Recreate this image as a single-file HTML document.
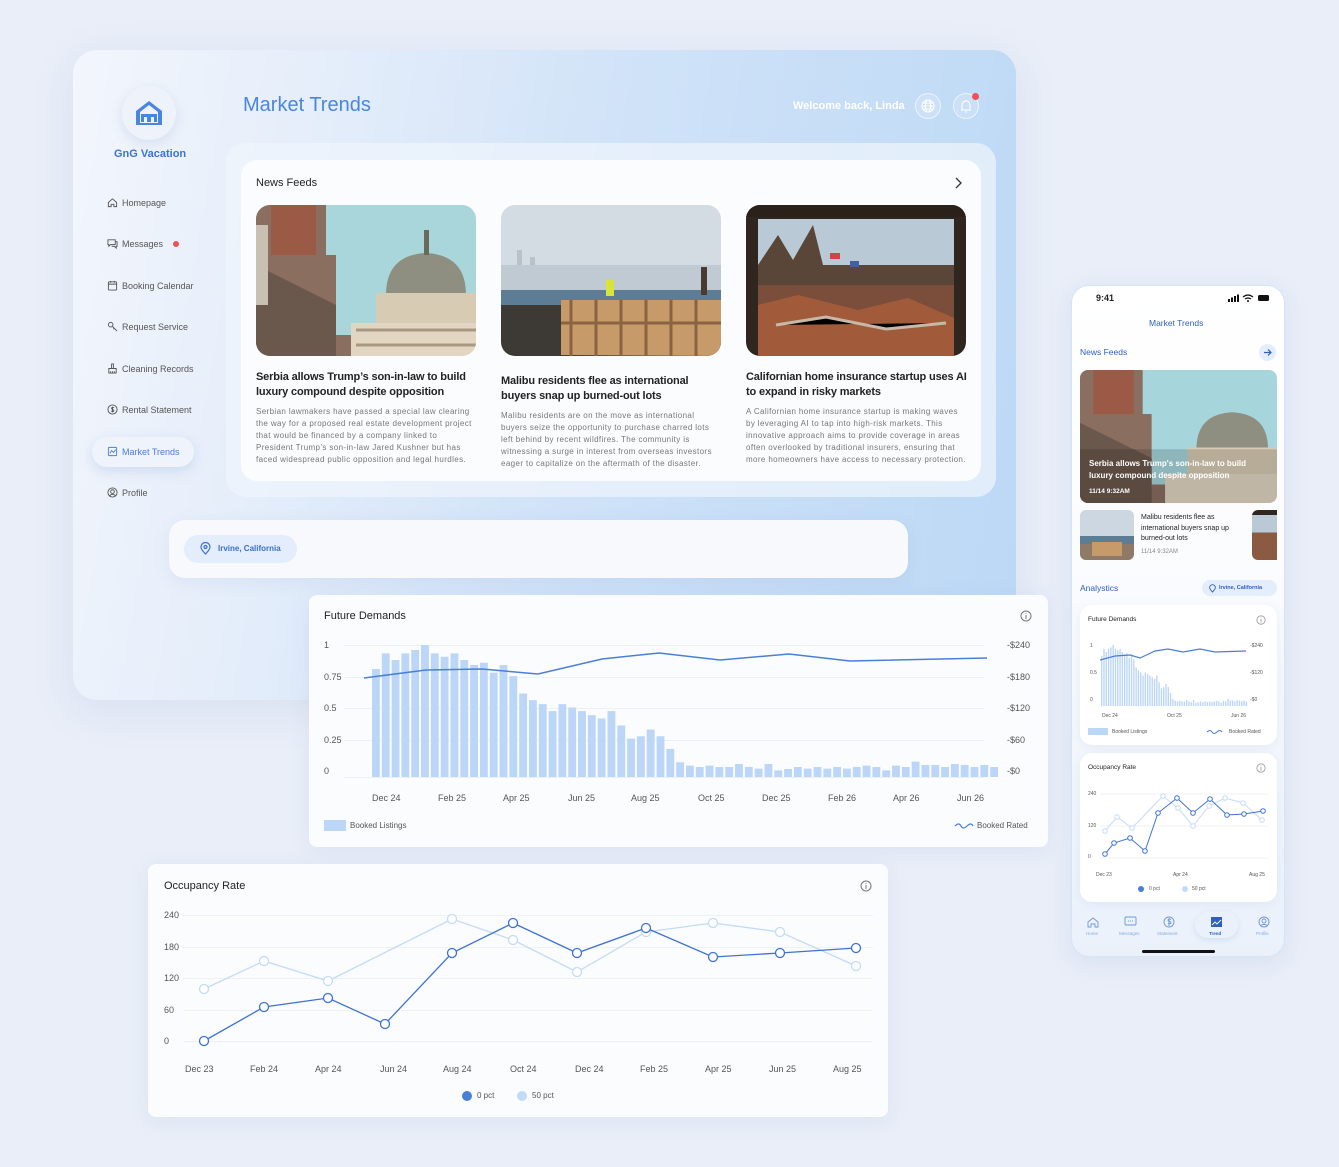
<!DOCTYPE html>
<html><head><meta charset="utf-8">
<style>
*{box-sizing:border-box;margin:0;padding:0}
body{width:1339px;height:1167px;background:#e9eef8;font-family:"Liberation Sans",sans-serif;position:relative;overflow:hidden;color:#222}
.abs{position:absolute}
.panel{left:73px;top:50px;width:943px;height:650px;border-radius:24px;background:linear-gradient(100deg,#f3f6fc 0%,#e4edfa 25%,#cfe2f8 55%,#bcd8f5 100%);box-shadow:0 10px 40px rgba(120,150,200,.15)}
.nav{left:107px;font-size:9px;color:#555;display:flex;align-items:center;gap:4px}
.nav svg{width:11px;height:11px}
.t{white-space:nowrap}
.card{background:#fbfcfe;border-radius:8px;box-shadow:0 4px 20px rgba(120,150,200,.12)}
.news h4{font-size:11px;font-weight:bold;color:#222;line-height:15px;margin-top:14px;white-space:nowrap;letter-spacing:-0.15px}
.news p{font-size:8px;color:#777;line-height:12px;margin-top:6px;white-space:nowrap;letter-spacing:0.38px}
.img{border-radius:14px;overflow:hidden;width:220px;height:151px}
.lbl{font-size:9px;color:#555}
</style></head><body>

<div class="abs panel"></div>
<div class="abs" style="left:122px;top:86px;width:54px;height:54px;border-radius:50%;background:#eef3fb;box-shadow:0 4px 12px rgba(120,150,200,.2)"></div>
<svg class="abs" style="left:134px;top:99px" width="30" height="28" viewBox="0 0 30 28"><path d="M15 2L2 12v14h26V12z" fill="#4a86e0"/><path d="M15 6L6 13v11h18V13z" fill="#eef3fb"/><path d="M7 15h16v8h-3v-5h-3v5h-4v-5h-3v5H7z" fill="#4a86e0"/></svg>
<div class="abs t" style="left:114px;top:148px;font-size:11px;font-weight:bold;color:#3a73d6">GnG Vacation</div>

<div class="abs nav" style="top:197px"><svg viewBox="0 0 12 12" fill="none" stroke="#555" stroke-width="1"><path d="M1.5 6L6 2l4.5 4v4.5h-3V8h-3v2.5h-3z"/></svg>Homepage</div>
<div class="abs nav" style="top:238px"><svg viewBox="0 0 12 12" fill="none" stroke="#555" stroke-width="1"><path d="M1 2h8v5H4l-2 2V7H1z"/><path d="M9 4h2v5h-1v2l-2-2H5"/></svg>Messages<span style="width:6px;height:6px;border-radius:50%;background:#f0505a;margin-left:6px"></span></div>
<div class="abs nav" style="top:280px"><svg viewBox="0 0 12 12" fill="none" stroke="#555" stroke-width="1"><rect x="1.5" y="2" width="9" height="9" rx="1"/><path d="M1.5 4.5h9M4 1v2M8 1v2"/></svg>Booking Calendar</div>
<div class="abs nav" style="top:321px"><svg viewBox="0 0 12 12" fill="none" stroke="#555" stroke-width="1"><circle cx="4" cy="4" r="2.5"/><path d="M6 6l5 5M8 8l-1 1"/></svg>Request Service</div>
<div class="abs nav" style="top:363px"><svg viewBox="0 0 12 12" fill="none" stroke="#555" stroke-width="1"><path d="M5 1h2v5H5zM2 6h8v5H2zM4 9v2M6 9v2M8 9v2"/></svg>Cleaning Records</div>
<div class="abs nav" style="top:404px"><svg viewBox="0 0 12 12" fill="none" stroke="#555" stroke-width="1"><circle cx="6" cy="6" r="5"/><path d="M7.5 4.3C7 3.7 5 3.5 5 4.8S7.5 5.8 7.5 7.2 5.2 8.3 4.5 7.6M6 2.8v6.4"/></svg>Rental Statement</div>
<div class="abs" style="left:92px;top:437px;width:102px;height:30px;border-radius:15px;background:#eef3fc;box-shadow:0 4px 12px rgba(120,150,210,.25)"></div>
<div class="abs nav" style="top:446px;color:#4a7fd8"><svg viewBox="0 0 12 12" fill="none" stroke="#4a7fd8" stroke-width="1"><rect x="1.5" y="1.5" width="9" height="9" rx="1"/><path d="M3 8l2-3 2 2 2.5-3"/></svg>Market Trends</div>
<div class="abs nav" style="top:487px"><svg viewBox="0 0 12 12" fill="none" stroke="#555" stroke-width="1"><circle cx="6" cy="6" r="5"/><circle cx="6" cy="5" r="2"/><path d="M3 9.5c1.5-2 4.5-2 6 0"/></svg>Profile</div>

<div class="abs t" style="left:243px;top:94px;font-size:20px;color:#4a86e0">Market Trends</div>
<div class="abs t" style="left:793px;top:100px;font-size:11px;font-weight:bold;color:#fff">Welcome back, Linda</div>
<div class="abs" style="left:915px;top:93px;width:26px;height:26px;border-radius:50%;border:1px solid rgba(255,255,255,.6);background:rgba(255,255,255,.15)"></div>
<svg class="abs" style="left:921px;top:99px" width="14" height="14" viewBox="0 0 14 14" fill="none" stroke="#fff" stroke-width="1.1"><circle cx="7" cy="7" r="6"/><ellipse cx="7" cy="7" rx="2.6" ry="6"/><path d="M1 7h12M2 4h10M2 10h10"/></svg>
<div class="abs" style="left:953px;top:93px;width:26px;height:26px;border-radius:50%;border:1px solid rgba(255,255,255,.6);background:rgba(255,255,255,.15)"></div>
<svg class="abs" style="left:960px;top:99px" width="12" height="14" viewBox="0 0 12 14" fill="none" stroke="#fff" stroke-width="1.1"><path d="M2 11V6a4 4 0 018 0v5zM1 11h10M5 13h2M6 1v1"/></svg>
<div class="abs" style="left:972px;top:93px;width:7px;height:7px;border-radius:50%;background:#f0505a"></div>

<div class="abs" style="left:226px;top:143px;width:770px;height:354px;border-radius:20px;background:rgba(240,245,252,.7)"></div>
<div class="abs" style="left:241px;top:160px;width:740px;height:321px;border-radius:16px;background:#fbfcfe"></div>
<div class="abs t" style="left:256px;top:177px;font-size:11px">News Feeds</div>
<svg class="abs" style="left:954px;top:177px" width="8" height="12" viewBox="0 0 8 12" fill="none" stroke="#333" stroke-width="1.3"><path d="M2 1l5 5-5 5"/></svg>

<div class="abs news" style="left:256px;top:205px;width:222px">
<div class="img"><svg width="220" height="151" viewBox="0 0 220 151"><rect width="220" height="151" fill="#a8d6db"/><path d="M0 0h70v50h10v80h20v21H0z" fill="#8a6e60"/><rect x="15" y="0" width="45" height="50" fill="#9b5a45"/><path d="M0 60l80 40v51H0z" fill="#6b584c"/><rect x="0" y="20" width="12" height="80" fill="#c9c0b4"/><path d="M130 90q0-40 40-42q40 2 40 42z" fill="#8e8f80"/><rect x="120" y="88" width="100" height="30" fill="#d8cbb3"/><rect x="95" y="118" width="125" height="33" fill="#e2d6c2"/><path d="M100 125h120M100 140h120" stroke="#a89880" stroke-width="3"/><rect x="168" y="25" width="5" height="25" fill="#6b6a5a"/></svg></div>
<h4>Serbia allows Trump’s son-in-law to build<br>luxury compound despite opposition</h4>
<p>Serbian lawmakers have passed a special law clearing<br>the way for a proposed real estate development project<br>that would be financed by a company linked to<br>President Trump’s son-in-law Jared Kushner but has<br>faced widespread public opposition and legal hurdles.</p></div>

<div class="abs news" style="left:501px;top:205px;width:222px">
<div class="img"><svg width="220" height="151" viewBox="0 0 220 151"><rect width="220" height="151" fill="#d3dbe3"/><rect y="60" width="220" height="25" fill="#c0cad3"/><path d="M0 85h220v20H0z" fill="#5d7c96"/><path d="M10 60h6v-15h5v15h8v-8h5v8" fill="#b9c2cb"/><rect y="100" width="220" height="51" fill="#3d3a36"/><path d="M60 150V95h160v56z" fill="#c79a6a"/><path d="M70 95v56M95 95v56M120 95v56M145 95v56M170 95v56M195 95v56M60 118h160" stroke="#8a6440" stroke-width="3"/><rect x="105" y="75" width="8" height="16" fill="#d8e43a"/><rect x="200" y="62" width="6" height="28" fill="#4a3a30"/></svg></div>
<h4 style="margin-top:18px">Malibu residents flee as international<br>buyers snap up burned-out lots</h4>
<p>Malibu residents are on the move as international<br>buyers seize the opportunity to purchase charred lots<br>left behind by recent wildfires. The community is<br>witnessing a surge in interest from overseas investors<br>eager to capitalize on the aftermath of the disaster.</p></div>

<div class="abs news" style="left:746px;top:205px;width:222px">
<div class="img"><svg width="220" height="151" viewBox="0 0 220 151"><rect width="220" height="151" fill="#2f2620"/><rect x="12" y="14" width="196" height="75" fill="#b9c9d6"/><path d="M12 60l20-30 15 25 20-35 10 40h131v29H12z" fill="#5a4638"/><rect x="12" y="80" width="196" height="71" fill="#7a4e3a"/><path d="M12 100l40-10 60 15 50-12 46 20v38H12z" fill="#a25b3a"/><path d="M30 120l50-8 60 12 60-6" stroke="#c9b8a8" stroke-width="3"/><rect x="84" y="48" width="10" height="6" fill="#d24444"/><rect x="104" y="56" width="9" height="6" fill="#4060a0"/><rect x="0" y="0" width="220" height="12" fill="#2a211b"/></svg></div>
<h4>Californian home insurance startup uses AI<br>to expand in risky markets</h4>
<p>A Californian home insurance startup is making waves<br>by leveraging AI to tap into high-risk markets. This<br>innovative approach aims to provide coverage in areas<br>often overlooked by traditional insurers, ensuring that<br>more homeowners have access to necessary protection.</p></div>

<div class="abs" style="left:169px;top:520px;width:739px;height:58px;border-radius:16px;background:#f7f9fd;box-shadow:0 4px 16px rgba(120,150,200,.12)"></div>
<div class="abs" style="left:184px;top:535px;width:113px;height:28px;border-radius:14px;background:#e3edfb"></div>
<svg class="abs" style="left:200px;top:542px" width="11" height="13" viewBox="0 0 11 13" fill="none" stroke="#3a6fd0" stroke-width="1.2"><path d="M5.5 12S1 7.5 1 5a4.5 4.5 0 019 0c0 2.5-4.5 7-4.5 7z"/><circle cx="5.5" cy="5" r="1.5"/></svg>
<div class="abs t" style="left:218px;top:544px;font-size:8px;font-weight:bold;color:#3a6fd0">Irvine, California</div>

<div class="abs card" style="left:309px;top:595px;width:739px;height:252px"></div>
<div class="abs t" style="left:324px;top:610px;font-size:11px">Future Demands</div>
<svg class="abs" style="left:1020px;top:610px" width="12" height="12" viewBox="0 0 12 12" fill="none" stroke="#777"><circle cx="6" cy="6" r="5"/><path d="M6 5v4M6 3v.8"/></svg>
<svg class="abs" style="left:340px;top:640px" width="660" height="140"><g stroke="#edf0f5" stroke-width="1"><path d="M4 5.5h640M4 37.5h640M4 68.5h640M4 100.5h640M4 137.5h640"/></g></svg>
<div class="abs lbl" style="left:324px;top:640px">1</div>
<div class="abs lbl" style="left:324px;top:672px">0.75</div>
<div class="abs lbl" style="left:324px;top:703px">0.5</div>
<div class="abs lbl" style="left:324px;top:735px">0.25</div>
<div class="abs lbl" style="left:324px;top:766px">0</div>
<div class="abs lbl" style="left:1007px;top:640px">-$240</div>
<div class="abs lbl" style="left:1007px;top:672px">-$180</div>
<div class="abs lbl" style="left:1007px;top:703px">-$120</div>
<div class="abs lbl" style="left:1007px;top:735px">-$60</div>
<div class="abs lbl" style="left:1007px;top:766px">-$0</div>
<svg class="abs" style="left:372px;top:645px" width="628" height="132" viewBox="0 0 640 395" preserveAspectRatio="none"><path fill="#bcd6f8" d="M0 72h8V395h-8zM10 25h8V395h-8zM20 45h8V395h-8zM30 25h8V395h-8zM40 15h8V395h-8zM50 0h8V395h-8zM60 25h8V395h-8zM70 35h8V395h-8zM80 25h8V395h-8zM90 45h8V395h-8zM100 60h8V395h-8zM110 53h8V395h-8zM120 83h8V395h-8zM130 60h8V395h-8zM140 93h8V395h-8zM150 145h8V395h-8zM160 165h8V395h-8zM170 177h8V395h-8zM180 198h8V395h-8zM190 177h8V395h-8zM200 187h8V395h-8zM210 198h8V395h-8zM220 210h8V395h-8zM230 220h8V395h-8zM240 198h8V395h-8zM250 241h8V395h-8zM260 280h8V395h-8zM270 273h8V395h-8zM280 253h8V395h-8zM290 273h8V395h-8zM300 311h8V395h-8zM310 351h8V395h-8zM320 361h8V395h-8zM330 365h8V395h-8zM340 361h8V395h-8zM350 365h8V395h-8zM360 365h8V395h-8zM370 356h8V395h-8zM380 365h8V395h-8zM390 370h8V395h-8zM400 356h8V395h-8zM410 375h8V395h-8zM420 371h8V395h-8zM430 365h8V395h-8zM440 370h8V395h-8zM450 365h8V395h-8zM460 370h8V395h-8zM470 365h8V395h-8zM480 370h8V395h-8zM490 365h8V395h-8zM500 361h8V395h-8zM510 365h8V395h-8zM520 375h8V395h-8zM530 361h8V395h-8zM540 365h8V395h-8zM550 349h8V395h-8zM560 359h8V395h-8zM570 359h8V395h-8zM580 365h8V395h-8zM590 356h8V395h-8zM600 359h8V395h-8zM610 365h8V395h-8zM620 359h8V395h-8zM630 365h8V395h-8z"/></svg>
<svg class="abs" style="left:0;top:0" width="1339" height="1167" pointer-events="none"><polyline fill="none" stroke="#4a7fd8" stroke-width="1.5" points="364,678 426,670 482,669 538,674 602,659 659,653 720,660 789,654 850,661 987,658"/></svg>
<div class="abs lbl t" style="left:372px;top:793px">Dec 24</div>
<div class="abs lbl t" style="left:438px;top:793px">Feb 25</div>
<div class="abs lbl t" style="left:503px;top:793px">Apr 25</div>
<div class="abs lbl t" style="left:568px;top:793px">Jun 25</div>
<div class="abs lbl t" style="left:631px;top:793px">Aug 25</div>
<div class="abs lbl t" style="left:698px;top:793px">Oct 25</div>
<div class="abs lbl t" style="left:762px;top:793px">Dec 25</div>
<div class="abs lbl t" style="left:828px;top:793px">Feb 26</div>
<div class="abs lbl t" style="left:893px;top:793px">Apr 26</div>
<div class="abs lbl t" style="left:957px;top:793px">Jun 26</div>
<div class="abs" style="left:324px;top:820px;width:22px;height:11px;background:#bcd6f8"></div>
<div class="abs t" style="left:350px;top:821px;font-size:8px;color:#555">Booked Listings</div>
<svg class="abs" style="left:954px;top:821px" width="20" height="8"><path d="M1 5q4-4 6 0t6 0 6 0" fill="none" stroke="#4a7fd8" stroke-width="1.2"/></svg>
<div class="abs t" style="left:977px;top:821px;font-size:8px;color:#555">Booked Rated</div>

<div class="abs card" style="left:148px;top:864px;width:740px;height:253px"></div>
<div class="abs t" style="left:164px;top:880px;font-size:11px">Occupancy Rate</div>
<svg class="abs" style="left:860px;top:880px" width="12" height="12" viewBox="0 0 12 12" fill="none" stroke="#777"><circle cx="6" cy="6" r="5"/><path d="M6 5v4M6 3v.8"/></svg>
<div class="abs lbl" style="left:164px;top:910px">240</div>
<div class="abs lbl" style="left:164px;top:942px">180</div>
<div class="abs lbl" style="left:164px;top:973px">120</div>
<div class="abs lbl" style="left:164px;top:1005px">60</div>
<div class="abs lbl" style="left:164px;top:1036px">0</div>
<svg class="abs" style="left:0;top:0" width="1339" height="1167">
<g stroke="#eef1f6"><path d="M183 915.5h690M183 947.5h690M183 978.5h690M183 1010.5h690M183 1041.5h690"/></g>
<polyline fill="none" stroke="#c3dbf9" stroke-width="1.3" points="204,989 264,961 328,981 452,919 513,940 577,972 646,932 713,923 780,932 856,966"/>
<g fill="#fff" stroke="#c3dbf9" stroke-width="1.3"><circle cx="204" cy="989" r="4.5"/><circle cx="264" cy="961" r="4.5"/><circle cx="328" cy="981" r="4.5"/><circle cx="452" cy="919" r="4.5"/><circle cx="513" cy="940" r="4.5"/><circle cx="577" cy="972" r="4.5"/><circle cx="646" cy="932" r="4.5"/><circle cx="713" cy="923" r="4.5"/><circle cx="780" cy="932" r="4.5"/><circle cx="856" cy="966" r="4.5"/></g>
<polyline fill="none" stroke="#3f72d4" stroke-width="1.3" points="204,1041 264,1007 328,998 385,1024 452,953 513,923 577,953 646,928 713,957 780,953 856,948"/>
<g fill="#fff" stroke="#3f72d4" stroke-width="1.3"><circle cx="204" cy="1041" r="4.5"/><circle cx="264" cy="1007" r="4.5"/><circle cx="328" cy="998" r="4.5"/><circle cx="385" cy="1024" r="4.5"/><circle cx="452" cy="953" r="4.5"/><circle cx="513" cy="923" r="4.5"/><circle cx="577" cy="953" r="4.5"/><circle cx="646" cy="928" r="4.5"/><circle cx="713" cy="957" r="4.5"/><circle cx="780" cy="953" r="4.5"/><circle cx="856" cy="948" r="4.5"/></g>
<circle cx="467" cy="1096" r="5" fill="#4a7fd8"/><circle cx="522" cy="1096" r="5" fill="#c3dbf9"/>
</svg>
<div class="abs lbl t" style="left:185px;top:1064px">Dec 23</div>
<div class="abs lbl t" style="left:250px;top:1064px">Feb 24</div>
<div class="abs lbl t" style="left:315px;top:1064px">Apr 24</div>
<div class="abs lbl t" style="left:380px;top:1064px">Jun 24</div>
<div class="abs lbl t" style="left:443px;top:1064px">Aug 24</div>
<div class="abs lbl t" style="left:510px;top:1064px">Oct 24</div>
<div class="abs lbl t" style="left:575px;top:1064px">Dec 24</div>
<div class="abs lbl t" style="left:640px;top:1064px">Feb 25</div>
<div class="abs lbl t" style="left:705px;top:1064px">Apr 25</div>
<div class="abs lbl t" style="left:769px;top:1064px">Jun 25</div>
<div class="abs lbl t" style="left:833px;top:1064px">Aug 25</div>
<div class="abs t" style="left:477px;top:1091px;font-size:8px;color:#555">0 pct</div>
<div class="abs t" style="left:532px;top:1091px;font-size:8px;color:#555">50 pct</div>

<div class="abs" style="left:1071px;top:285px;width:214px;height:672px;border-radius:18px;background:linear-gradient(#fff 0%,#fbfcfe 40%,#eaf1fb 100%);border:1px solid #d6e4f7;box-shadow:0 6px 24px rgba(120,150,200,.15)"></div>
<div class="abs t" style="left:1096px;top:293px;font-size:9px;font-weight:bold">9:41</div>
<svg class="abs" style="left:1228px;top:294px" width="44" height="8"><rect x="0" y="5" width="2" height="3" fill="#111"/><rect x="3" y="3.5" width="2" height="4.5" fill="#111"/><rect x="6" y="2" width="2" height="6" fill="#111"/><rect x="9" y="0.5" width="2" height="7.5" fill="#111"/><path d="M15 3q5-4 10 0M17 5q3-2 6 0" fill="none" stroke="#111" stroke-width="1.2"/><circle cx="20" cy="7" r="1" fill="#111"/><rect x="30" y="1" width="11" height="6" rx="1.5" fill="#111"/></svg>
<div class="abs t" style="left:1149px;top:318px;font-size:8.5px;color:#2f5fbf">Market Trends</div>
<div class="abs t" style="left:1080px;top:347px;font-size:8.5px;color:#2f5fbf">News Feeds</div>
<div class="abs" style="left:1259px;top:344px;width:17px;height:17px;border-radius:50%;background:#e3edfb"></div>
<svg class="abs" style="left:1263px;top:348px" width="9" height="9" viewBox="0 0 9 9" fill="none" stroke="#2f5fbf" stroke-width="1.2"><path d="M1 4.5h7M5 1.5l3 3-3 3"/></svg>
<div class="abs" style="left:1080px;top:370px;width:197px;height:133px;border-radius:8px;overflow:hidden"><svg width="197" height="133" viewBox="0 0 220 151" preserveAspectRatio="none"><rect width="220" height="151" fill="#a6d6dc"/><path d="M0 0h70v50h10v80h20v21H0z" fill="#8a6e60"/><rect x="15" y="0" width="45" height="50" fill="#9b5a45"/><path d="M0 60l80 40v51H0z" fill="#6b584c"/><path d="M130 90q0-40 40-42q40 2 40 42z" fill="#8e8f80"/><rect x="120" y="88" width="100" height="30" fill="#d8cbb3"/><rect x="95" y="118" width="125" height="33" fill="#e2d6c2"/><rect y="90" width="220" height="61" fill="rgba(0,0,0,.15)"/></svg></div>
<div class="abs" style="left:1089px;top:458px;font-size:8px;font-weight:bold;color:#fff;line-height:12px;width:180px">Serbia allows Trump's son-in-law to build luxury compound despite opposition</div>
<div class="abs t" style="left:1089px;top:488px;font-size:6.5px;font-weight:bold;color:#fff">11/14 9:32AM</div>
<div class="abs" style="left:1080px;top:510px;width:54px;height:50px;border-radius:6px;overflow:hidden"><svg width="54" height="50" viewBox="0 0 54 50"><rect width="54" height="50" fill="#cdd7e1"/><rect y="26" width="54" height="8" fill="#5d7c96"/><rect y="34" width="54" height="16" fill="#8e7a66"/><rect x="12" y="32" width="30" height="14" fill="#c79a6a"/></svg></div>
<div class="abs" style="left:1141px;top:513px;font-size:7px;line-height:10.5px;width:108px;color:#222">Malibu residents flee as international buyers snap up burned-out lots</div>
<div class="abs t" style="left:1141px;top:549px;font-size:6px;color:#888">11/14 9:32AM</div>
<div class="abs" style="left:1252px;top:510px;width:25px;height:50px;border-radius:6px 0 0 6px;overflow:hidden;background:linear-gradient(#2e2620 0 10%,#b9c9d6 10% 45%,#8a5a42 45%)"></div>
<div class="abs t" style="left:1080px;top:583px;font-size:8.5px;color:#2f5fbf">Analystics</div>
<div class="abs" style="left:1202px;top:580px;width:75px;height:16px;border-radius:8px;background:#e3edfb"></div>
<svg class="abs" style="left:1209px;top:584px" width="7" height="9" viewBox="0 0 11 13" fill="none" stroke="#2f5fbf" stroke-width="1.4"><path d="M5.5 12S1 7.5 1 5a4.5 4.5 0 019 0c0 2.5-4.5 7-4.5 7z"/></svg>
<div class="abs t" style="left:1219px;top:585px;font-size:5.5px;font-weight:bold;color:#2f5fbf">Irvine, California</div>

<div class="abs" style="left:1080px;top:605px;width:197px;height:140px;border-radius:12px;background:#fff;box-shadow:0 2px 10px rgba(120,150,200,.12)"></div>
<div class="abs t" style="left:1088px;top:616px;font-size:6.5px">Future Demands</div>
<svg class="abs" style="left:1256px;top:615px" width="10" height="10" viewBox="0 0 12 12" fill="none" stroke="#999"><circle cx="6" cy="6" r="5"/><path d="M6 5v4M6 3v.8"/></svg>
<div class="abs t" style="left:1090px;top:643px;font-size:5px;color:#555">1</div>
<div class="abs t" style="left:1090px;top:670px;font-size:5px;color:#555">0.5</div>
<div class="abs t" style="left:1090px;top:697px;font-size:5px;color:#555">0</div>
<div class="abs t" style="left:1250px;top:643px;font-size:5px;color:#555">-$240</div>
<div class="abs t" style="left:1250px;top:670px;font-size:5px;color:#555">-$120</div>
<div class="abs t" style="left:1250px;top:697px;font-size:5px;color:#555">-$0</div>
<svg class="abs" style="left:1101px;top:645px" width="147" height="61" viewBox="0 0 640 395" preserveAspectRatio="none"><path fill="#bcd6f8" d="M0 72h6V395h-6zM10 25h6V395h-6zM20 45h6V395h-6zM30 25h6V395h-6zM40 15h6V395h-6zM50 0h6V395h-6zM60 25h6V395h-6zM70 35h6V395h-6zM80 25h6V395h-6zM90 45h6V395h-6zM100 60h6V395h-6zM110 53h6V395h-6zM120 83h6V395h-6zM130 60h6V395h-6zM140 93h6V395h-6zM150 145h6V395h-6zM160 165h6V395h-6zM170 177h6V395h-6zM180 198h6V395h-6zM190 177h6V395h-6zM200 187h6V395h-6zM210 198h6V395h-6zM220 210h6V395h-6zM230 220h6V395h-6zM240 198h6V395h-6zM250 241h6V395h-6zM260 280h6V395h-6zM270 273h6V395h-6zM280 253h6V395h-6zM290 273h6V395h-6zM300 311h6V395h-6zM310 351h6V395h-6zM320 361h6V395h-6zM330 365h6V395h-6zM340 361h6V395h-6zM350 365h6V395h-6zM360 365h6V395h-6zM370 356h6V395h-6zM380 365h6V395h-6zM390 370h6V395h-6zM400 356h6V395h-6zM410 375h6V395h-6zM420 371h6V395h-6zM430 365h6V395h-6zM440 370h6V395h-6zM450 365h6V395h-6zM460 370h6V395h-6zM470 365h6V395h-6zM480 370h6V395h-6zM490 365h6V395h-6zM500 361h6V395h-6zM510 365h6V395h-6zM520 375h6V395h-6zM530 361h6V395h-6zM540 365h6V395h-6zM550 349h6V395h-6zM560 359h6V395h-6zM570 359h6V395h-6zM580 365h6V395h-6zM590 356h6V395h-6zM600 359h6V395h-6zM610 365h6V395h-6zM620 359h6V395h-6zM630 365h6V395h-6z"/></svg>
<svg class="abs" style="left:0;top:0" width="1339" height="1167"><polyline fill="none" stroke="#4a7fd8" stroke-width="1.2" points="1100,660 1115,656 1130,655 1140,658 1155,651 1168,649 1183,652 1200,649 1215,652 1246,651"/></svg>
<div class="abs t" style="left:1102px;top:713px;font-size:5px;color:#555">Dec 24</div>
<div class="abs t" style="left:1167px;top:713px;font-size:5px;color:#555">Oct 25</div>
<div class="abs t" style="left:1231px;top:713px;font-size:5px;color:#555">Jun 26</div>
<div class="abs" style="left:1088px;top:728px;width:20px;height:7px;background:#bcd6f8"></div>
<div class="abs t" style="left:1112px;top:729px;font-size:5px;color:#555">Booked Listings</div>
<svg class="abs" style="left:1206px;top:729px" width="20" height="5"><path d="M1 3q3-3 5 0t5 0 5 0" fill="none" stroke="#4a7fd8"/></svg>
<div class="abs t" style="left:1229px;top:729px;font-size:5px;color:#555">Booked Rated</div>

<div class="abs" style="left:1080px;top:753px;width:197px;height:149px;border-radius:12px;background:#fff;box-shadow:0 2px 10px rgba(120,150,200,.12)"></div>
<div class="abs t" style="left:1088px;top:764px;font-size:6.5px">Occupancy Rate</div>
<svg class="abs" style="left:1256px;top:763px" width="10" height="10" viewBox="0 0 12 12" fill="none" stroke="#999"><circle cx="6" cy="6" r="5"/><path d="M6 5v4M6 3v.8"/></svg>
<div class="abs t" style="left:1088px;top:791px;font-size:5px;color:#555">240</div>
<div class="abs t" style="left:1088px;top:823px;font-size:5px;color:#555">120</div>
<div class="abs t" style="left:1088px;top:854px;font-size:5px;color:#555">0</div>
<svg class="abs" style="left:0;top:0" width="1339" height="1167">
<g stroke="#f0f2f6"><path d="M1100 794h168M1100 826h168M1100 858h168"/></g>
<polyline fill="none" stroke="#c3dbf9" points="1105,831 1117,817 1132,828 1163,796 1178,808 1193,826 1209,806 1225,798 1243,803 1262,820"/>
<g fill="#fff" stroke="#c3dbf9"><circle cx="1105" cy="831" r="2.3"/><circle cx="1117" cy="817" r="2.3"/><circle cx="1132" cy="828" r="2.3"/><circle cx="1163" cy="796" r="2.3"/><circle cx="1178" cy="808" r="2.3"/><circle cx="1193" cy="826" r="2.3"/><circle cx="1209" cy="806" r="2.3"/><circle cx="1225" cy="798" r="2.3"/><circle cx="1243" cy="803" r="2.3"/><circle cx="1262" cy="820" r="2.3"/></g>
<polyline fill="none" stroke="#3f72d4" points="1105,854 1114,843 1130,838 1145,851 1158,813 1177,798 1193,813 1210,799 1227,815 1244,814 1263,811"/>
<g fill="#fff" stroke="#3f72d4"><circle cx="1105" cy="854" r="2.3"/><circle cx="1114" cy="843" r="2.3"/><circle cx="1130" cy="838" r="2.3"/><circle cx="1145" cy="851" r="2.3"/><circle cx="1158" cy="813" r="2.3"/><circle cx="1177" cy="798" r="2.3"/><circle cx="1193" cy="813" r="2.3"/><circle cx="1210" cy="799" r="2.3"/><circle cx="1227" cy="815" r="2.3"/><circle cx="1244" cy="814" r="2.3"/><circle cx="1263" cy="811" r="2.3"/></g>
<circle cx="1141" cy="889" r="3" fill="#4a7fd8"/><circle cx="1185" cy="889" r="3" fill="#c3dbf9"/>
</svg>
<div class="abs t" style="left:1096px;top:872px;font-size:5px;color:#555">Dec 23</div>
<div class="abs t" style="left:1173px;top:872px;font-size:5px;color:#555">Apr 24</div>
<div class="abs t" style="left:1249px;top:872px;font-size:5px;color:#555">Aug 25</div>
<div class="abs t" style="left:1149px;top:886px;font-size:5px;color:#555">0 pct</div>
<div class="abs t" style="left:1192px;top:886px;font-size:5px;color:#555">50 pct</div>

<div class="abs" style="left:1195px;top:912px;width:43px;height:26px;border-radius:13px;background:#eaf1fb;box-shadow:0 2px 6px rgba(120,150,200,.2)"></div>
<svg class="abs" style="left:0;top:0" width="1339" height="1167" fill="none" stroke="#6f97dc" stroke-width="0.9">
<path d="M1088 922l5-4 5 4v5h-3v-3h-4v3h-3z"/>
<rect x="1125" y="917" width="11" height="8" rx="1"/><path d="M1128 921h1M1130 921h1M1132 921h1"/>
<circle cx="1169" cy="922" r="5"/><path d="M1171 919.5c-1-.7-3-.5-3 .8s3 1 3 2.3-2 1.3-3 .6M1169 918v8"/>
<rect x="1211" y="917" width="11" height="10" fill="#2f5fbf" stroke="none"/><path d="M1212 925l3-3 2 2 4-4" stroke="#fff"/>
<circle cx="1264" cy="922" r="5"/><circle cx="1264" cy="921" r="2"/><path d="M1261 925.5c1.5-1.5 4.5-1.5 6 0"/>
</svg>
<div class="abs t" style="left:1086px;top:931px;font-size:4.5px;color:#8aa9e0">Home</div>
<div class="abs t" style="left:1119px;top:931px;font-size:4.5px;color:#8aa9e0">Messages</div>
<div class="abs t" style="left:1157px;top:931px;font-size:4.5px;color:#8aa9e0">Statement</div>
<div class="abs t" style="left:1209px;top:931px;font-size:4.5px;color:#2f5fbf;font-weight:bold">Trend</div>
<div class="abs t" style="left:1256px;top:931px;font-size:4.5px;color:#8aa9e0">Profile</div>
<div class="abs" style="left:1142px;top:950px;width:73px;height:3px;border-radius:2px;background:#111"></div>
</body></html>
